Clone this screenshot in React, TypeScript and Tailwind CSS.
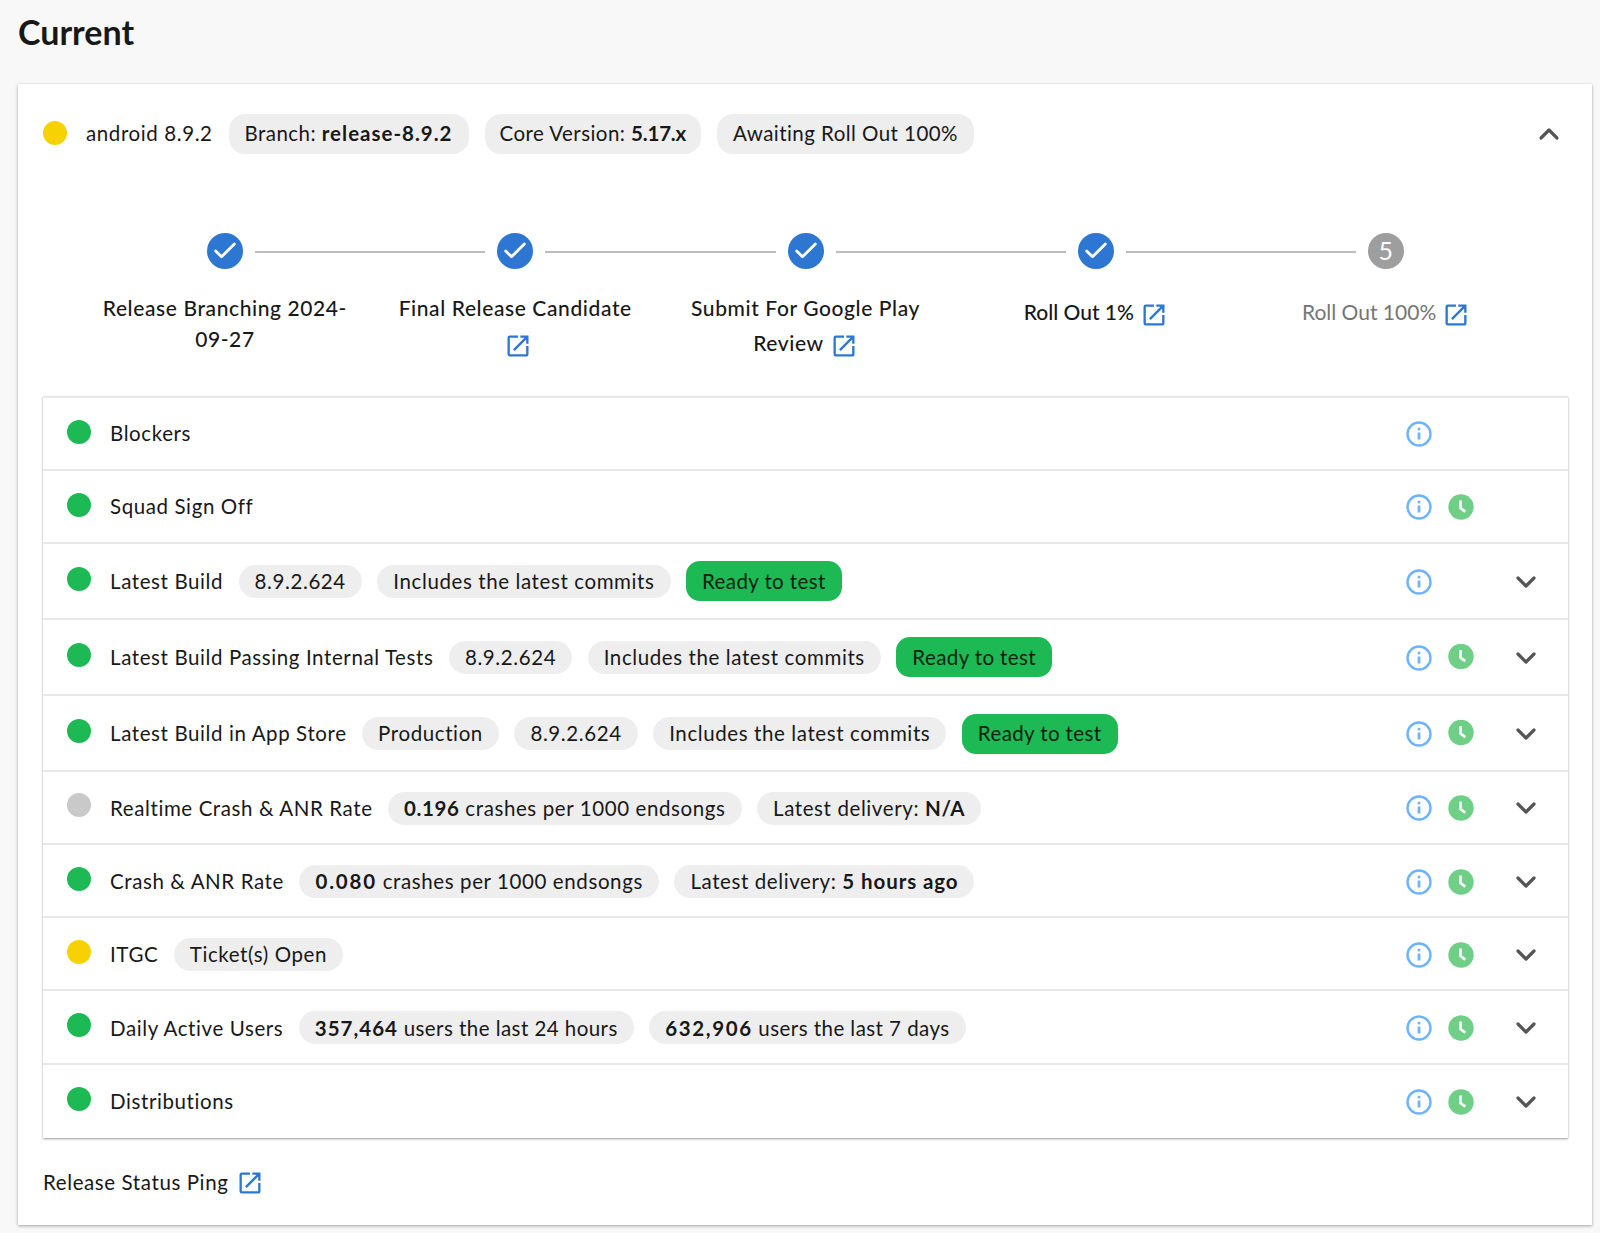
import { ChevronDown, ChevronUp, Check } from "lucide-react";

const font = "font-['Lato','Noto_Sans',sans-serif]";

type Chip = { pre?: string; bold?: string; boldClass?: string; post?: string; chipClass?: string; green?: boolean };
type Row = {
  dot: string;
  label: string;
  chips?: Chip[];
  clock?: boolean;
  chevron?: boolean;
  low?: boolean;
};

const GREEN = "bg-[#1db954]";
const YELLOW = "bg-[#f7d100]";
const GRAY = "bg-[#c9c9c9]";

const commits = { pre: "Includes the latest commits" };
const build = { pre: "8.9.2.624" };
const ready = { pre: "Ready to test", green: true };

const rows: Row[] = [
  { dot: GREEN, label: "Blockers" },
  { dot: GREEN, label: "Squad Sign Off", clock: true },
  { dot: GREEN, label: "Latest Build", chips: [build, commits, ready], chevron: true },
  { dot: GREEN, label: "Latest Build Passing Internal Tests", chips: [build, commits, ready], clock: true, chevron: true },
  { dot: GREEN, label: "Latest Build in App Store", chips: [{ pre: "Production" }, build, commits, ready], clock: true, chevron: true, low: true },
  {
    dot: GRAY,
    label: "Realtime Crash & ANR Rate",
    chips: [
      { bold: "0.196", post: " crashes per 1000 endsongs" },
      { pre: "Latest delivery: ", bold: "N/A" },
    ],
    clock: true,
    chevron: true,
    low: true,
  },
  {
    dot: GREEN,
    label: "Crash & ANR Rate",
    chips: [
      { bold: "0.080", boldClass: "tracking-[1.8px]", post: " crashes per 1000 endsongs" },
      { pre: "Latest delivery: ", bold: "5 hours ago", boldClass: "tracking-[0.9px]" },
    ],
    clock: true,
    chevron: true,
    low: true,
  },
  { dot: YELLOW, label: "ITGC", chips: [{ pre: "Ticket(s) Open" }], clock: true, chevron: true, low: true },
  {
    dot: GREEN,
    label: "Daily Active Users",
    chips: [
      { bold: "357,464", boldClass: "tracking-[1px]", post: " users the last 24 hours", chipClass: "tracking-[0.45px]" },
      { bold: "632,906", boldClass: "tracking-[1.6px]", post: " users the last 7 days", chipClass: "tracking-[0.45px]" },
    ],
    clock: true,
    chevron: true,
    low: true,
  },
  { dot: GREEN, label: "Distributions", clock: true, chevron: true },
];

function LinkIcon({ className = "" }: { className?: string }) {
  return (
    <svg viewBox="0 0 24 24" className={`inline-block h-7 w-7 fill-[#2d76d2] ${className}`}>
      <path d="M19 19H5V5h7V3H5a2 2 0 0 0-2 2v14a2 2 0 0 0 2 2h14c1.1 0 2-.9 2-2v-7h-2v7zM14 3v2h3.59l-9.83 9.83 1.41 1.41L19 6.41V10h2V3h-7z" />
    </svg>
  );
}

function InfoIcon() {
  return (
    <svg viewBox="0 0 26 26" className="h-[26px] w-[26px] fill-none stroke-[#6db3ff]">
      <circle cx="13" cy="13" r="11.5" strokeWidth="2.4" />
      <path d="M13 11.5v7" strokeWidth="2.8" />
      <circle cx="13" cy="8" r="1.5" className="fill-[#6db3ff] stroke-none" />
    </svg>
  );
}

function ClockIcon() {
  return (
    <svg viewBox="0 0 26 26" className="h-[26px] w-[26px]">
      <circle cx="13" cy="13" r="12.7" className="fill-[#70cf86]" />
      <path d="M12.5 6.5v7.5l4.8 3.6" className="fill-none stroke-white" strokeWidth="2.6" />
    </svg>
  );
}

function Pill({ chip, big }: { chip: Chip; big?: boolean }) {
  if (chip.green) {
    return (
      <span className={`flex h-10 items-center rounded-[14px] ${GREEN} px-4 tracking-[0.4px] text-[#0c1f12]`}>{chip.pre}</span>
    );
  }
  return (
    <span
      className={`flex items-center whitespace-pre bg-[#eeeeee] px-4 ${big ? "h-10 rounded-2xl pb-0.5 tracking-[0.45px]" : "h-[33px] rounded-full"} ${
        chip.chipClass ?? ""
      }`}
    >
      {chip.pre}
      {chip.bold && <b className={`font-bold ${chip.boldClass ?? ""}`}>{chip.bold}</b>}
      {chip.post}
    </span>
  );
}

function StatusRow({ row, last }: { row: Row; last: boolean }) {
  const tall = row.chips?.some((c) => c.green);
  const shift = row.low ? "translate-y-px" : "";
  return (
    <div
      className={`flex items-center pl-6 pr-[30px] ${tall ? "h-[75.8px]" : "h-[73.2px]"} ${
        last ? "" : "border-b-2 border-[#e8e8e8]"
      }`}
    >
      <span className={`mr-[19px] h-6 w-6 -translate-y-0.5 rounded-full ${row.dot}`} />
      <span className={shift}>{row.label}</span>
      <div className={`ml-[15.5px] flex items-center gap-[15.5px] ${shift}`}>
        {row.chips?.map((c, i) => <Pill key={i} chip={c} />)}
      </div>
      <div className={`ml-auto flex items-center ${row.chevron ? "translate-y-px" : ""}`}>
        <InfoIcon />
        <div className={`ml-4 w-[26px] ${tall ? "-translate-y-[1.5px]" : ""}`}>{row.clock && <ClockIcon />}</div>
        <div className="ml-10 w-6">
          {row.chevron && <ChevronDown className="h-8 w-8 -translate-x-1 text-[#555555]" strokeWidth={2.4} />}
        </div>
      </div>
    </div>
  );
}

function Step({ n, first, last, done, children }: { n: number; first?: boolean; last?: boolean; done: boolean; children: React.ReactNode }) {
  return (
    <div className="w-[290.3px] shrink-0 text-center">
      <div className="flex h-9 items-center justify-center gap-3">
        <div className={`h-0.5 flex-1 translate-y-px ${first ? "" : "bg-[#bdbdbd]"}`} />
        {done ? (
          <span className="flex h-9 w-9 items-center justify-center rounded-full bg-[#2d76d2]">
            <Check className="h-7 w-7 text-white" strokeWidth={2.4} />
          </span>
        ) : (
          <span className="flex h-9 w-9 items-center justify-center rounded-full bg-[#9e9e9e] pb-0.5 text-[25px] leading-none text-white">
            {n}
          </span>
        )}
        <div className={`h-0.5 flex-1 translate-y-px ${last ? "" : "bg-[#bdbdbd]"}`} />
      </div>
      <div className={`mt-[23px] px-3 text-[21px] leading-[31px] tracking-[0.6px] ${done ? "font-medium" : "text-[#757575]"}`}>
        {children}
      </div>
    </div>
  );
}

const stepIcon = "mb-1.5 ml-1.5 mt-3 -translate-y-[3px] align-middle";

export default function App() {
  return (
    <div className={`min-h-[1233px] bg-[#f8f8f8] pb-2 pl-[18px] pr-2 text-[20.5px] tracking-[0.6px] text-[#181818] ${font}`}>
      <h1 className="flex h-[84px] items-start pt-2.5 text-[34px] font-bold leading-[44px] tracking-normal">Current</h1>

      <div className="h-[1141px] bg-white pl-[25px] pr-6 pt-[30px] shadow-[0_1px_3px_rgba(0,0,0,0.35)]">
        <div className="flex h-10 items-center">
          <span className={`mr-[19px] h-6 w-6 -translate-y-px rounded-full ${YELLOW}`} />
          <span className="-translate-y-px">android 8.9.2</span>
          <div className="ml-4 flex gap-4">
            <Pill big chip={{ pre: "Branch: ", bold: "release-8.9.2", boldClass: "tracking-[1px]" }} />
            <Pill big chip={{ pre: "Core Version: ", bold: "5.17.x", boldClass: "tracking-[-0.2px]", chipClass: "px-[15px] tracking-[0.35px]" }} />
            <Pill big chip={{ pre: "Awaiting Roll Out 100%" }} />
          </div>
          <ChevronUp className="ml-auto mr-[3px] h-8 w-8 text-[#555555]" strokeWidth={2.4} />
        </div>

        <div className="mt-[79px] flex h-[163px] justify-center">
          <Step n={1} first done>Release Branching 2024-09-27</Step>
          <Step n={2} done>
            Final Release Candidate
            <LinkIcon className={stepIcon} />
          </Step>
          <Step n={3} done>
            Submit For Google Play Review
            <LinkIcon className={stepIcon} />
          </Step>
          <Step n={4} done>
            <span className="tracking-normal">Roll Out 1%</span>
            <LinkIcon className={stepIcon} />
          </Step>
          <Step n={5} last done={false}>
            <span className="tracking-normal">Roll Out 100%</span>
            <LinkIcon className={stepIcon} />
          </Step>
        </div>

        <div className="border-t-2 border-[#e8e8e8] shadow-[0_1px_2px_rgba(0,0,0,0.4)]">
          {rows.map((r, i) => (
            <StatusRow key={r.label} row={r} last={i === rows.length - 1} />
          ))}
        </div>

        <div className="mt-[26px] flex h-9 translate-y-px items-center">
          Release Status Ping
          <LinkIcon className="ml-2" />
        </div>
      </div>
    </div>
  );
}
